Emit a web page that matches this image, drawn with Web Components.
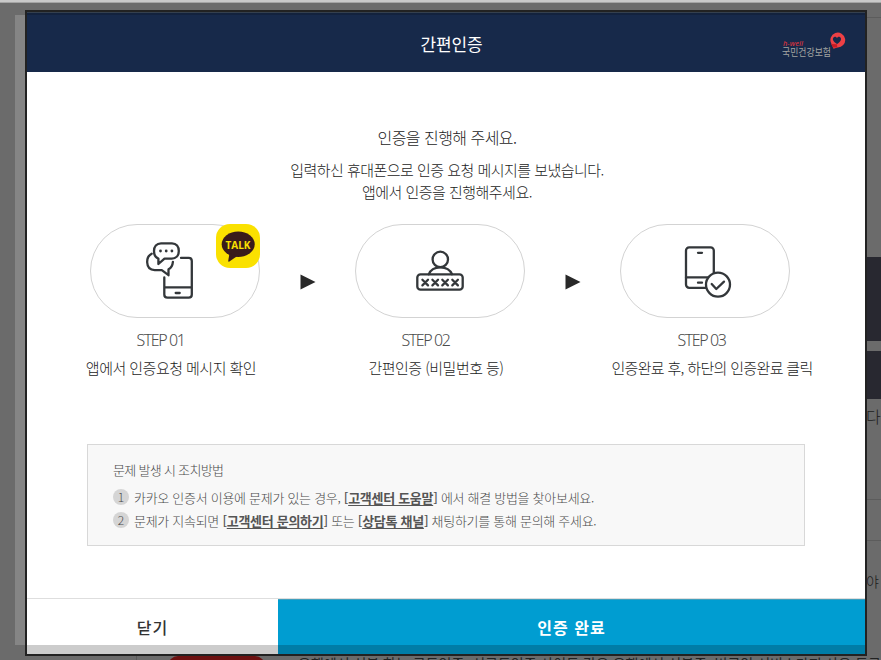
<!DOCTYPE html>
<html lang="ko">
<head>
<meta charset="UTF-8">
<title>간편인증</title>
<style>
    html, body {
        margin: 0;
        height: 100%;
        overflow: hidden;
    }
    body {
        font-family: "Noto Sans CJK KR", "Noto Sans", sans-serif;
        font-weight: 300;
        color: #1c1c1c;
    }
</style>
</head>
<body>
<auth-page>
    <page-backdrop slot="backdrop"></page-backdrop>
    <auth-dialog>
        <span slot="title">간편인증</span>
        <nhis-logo slot="logo"></nhis-logo>
        <auth-message>
            <span slot="lead">인증을 진행해 주세요.</span>
            <span>입력하신 휴대폰으로 인증 요청 메시지를 보냈습니다.<br>앱에서 인증을 진행해주세요.</span>
        </auth-message>
        <step-list>
            <auth-step icon="message" step="STEP 01">앱에서 인증요청 메시지 확인<talk-badge slot="badge"></talk-badge></auth-step>
            <step-arrow></step-arrow>
            <auth-step icon="password" step="STEP 02">간편인증 (비밀번호 등)</auth-step>
            <step-arrow></step-arrow>
            <auth-step icon="complete" step="STEP 03" class="last">인증완료 후, 하단의 인증완료 클릭</auth-step>
        </step-list>
        <help-box>
            <span slot="title">문제 발생 시 조치방법</span>
            <help-item number="1">카카오 인증서 이용에 문제가 있는 경우, <help-link>고객센터 도움말</help-link> 에서 해결 방법을 찾아보세요.</help-item>
            <help-item number="2">문제가 지속되면 <help-link>고객센터 문의하기</help-link> 또는 <help-link>상담톡 채널</help-link> 채팅하기를 통해 문의해 주세요.</help-item>
        </help-box>
        <dialog-button slot="actions">닫기</dialog-button>
        <dialog-button slot="actions" primary>인증 완료</dialog-button>
    </auth-dialog>
</auth-page>

<script>
    class BaseElement extends HTMLElement {
        constructor() {
            super();
            this.attachShadow({ mode: 'open' });
        }

        connectedCallback() {
            this.shadowRoot.innerHTML = this.render();
        }
    }

    class AuthPage extends BaseElement {
        render() {
            return `
                <style>
                    :host {
                        display: grid;
                        grid-template: 660px / 881px;
                    }
                    ::slotted(*), slot { grid-area: 1 / 1; }
                </style>
                <slot name="backdrop"></slot>
                <slot></slot>
            `;
        }
    }

    class PageBackdrop extends BaseElement {
        render() {
            return `
                <style>
                    :host {
                        display: grid;
                        box-sizing: border-box;
                        grid-template-columns: 15px 853px 13px;
                        height: 660px;
                        overflow: hidden;
                        background: #6b6b6b;
                        border-top: 2px solid #c9c9c9;
                        box-shadow: inset 0 1px #a4a4a4;
                    }
                    .left {
                        grid-column: 2;
                        display: flex;
                        flex-direction: column;
                        padding-top: 13px;
                    }
                    .shade {
                        width: 20px;
                        height: 630px;
                        background: #858585;
                    }
                    .below {
                        display: flex;
                        height: 15px;
                        margin-left: 121px;
                        border-left: 1px solid #5a5a5a;
                    }
                    .pill {
                        width: 97px;
                        height: 26px;
                        margin: 11px 0 0 31px;
                        border-radius: 10px;
                        background: #6d1111;
                        flex: none;
                    }
                    .copy {
                        margin: 8px 0 0 33px;
                        font-size: 14px;
                        font-weight: 400;
                        line-height: 20px;
                        white-space: nowrap;
                        color: #222;
                    }
                    .side {
                        display: flex;
                        flex-direction: column;
                        margin-left: -2px;
                        font-size: 16px;
                        line-height: 20px;
                    }
                    .line { height: 1px; background: #5c5c5c; }
                    .dark { background: #282830; }
                </style>
                <div class="left">
                    <div class="shade"></div>
                    <div class="below">
                        <div class="pill"></div>
                        <div class="copy">은행에서 신분 하는 공동인증, 신공동인증 사이트 같은 은행에서 신분증, 병공인 서비스가지 사용 등록</div>
                    </div>
                </div>
                <div class="side">
                    <div class="line" style="margin-top:15px"></div>
                    <div class="dark" style="margin-top:239px;height:84px"></div>
                    <div class="dark" style="margin-top:10px;height:48px"></div>
                    <div style="margin-top:7px">다</div>
                    <div class="line" style="margin-top:73px"></div>
                    <div class="line" style="margin-top:40px"></div>
                    <div style="margin-top:30px;font-size:14px">야</div>
                </div>
            `;
        }
    }

    class AuthDialog extends BaseElement {
        render() {
            return `
                <style>
                    :host {
                        display: flex;
                        flex-direction: column;
                        box-sizing: border-box;
                        width: 842px;
                        height: 646px;
                        margin: 10px 0 0 25px;
                        border: 2px solid #222;
                        background: #fff;
                        z-index: 1;
                        position: relative;
                    }
                    header {
                        display: grid;
                        grid-template-columns: 1fr auto 1fr;
                        align-items: center;
                        box-sizing: border-box;
                        height: 60px;
                        padding: 4px 19px 0 30px;
                        background: #17294a;
                        box-shadow: inset 0 1px #35404e, inset 0 3px #13223d;
                        color: #fff;
                        font-size: 17px;
                        line-height: 24px;
                        font-weight: 400;
                        letter-spacing: -0.2px;
                    }
                    .title { grid-column: 2; }
                    .logo { justify-self: end; }
                    main {
                        flex: 1;
                        padding: 0 60px;
                    }
                    footer {
                        display: grid;
                        grid-template-columns: 251px 1fr;
                        height: 55px;
                        border-top: 1px solid #dedede;
                    }
                    /* shadow that the frame below casts over the buttons */
                    .shade {
                        position: absolute;
                        inset: auto 0 0 0;
                        height: 9px;
                        background: rgba(0, 0, 0, 0.2);
                    }
                </style>
                <header>
                    <div class="title"><slot name="title"></slot></div>
                    <div class="logo"><slot name="logo"></slot></div>
                </header>
                <main><slot></slot></main>
                <footer><slot name="actions"></slot></footer>
                <div class="shade"></div>
            `;
        }
    }

    class NhisLogo extends BaseElement {
        render() {
            return `
                <style>
                    :host {
                        display: block;
                        letter-spacing: 0;
                    }
                    svg { display: block; }
                </style>
                <svg width="64" height="28" viewBox="0 0 64 28">
                    <text x="1" y="15.5" font-family="Noto Sans, sans-serif" font-size="7.5" font-style="italic" font-weight="500" textLength="20" lengthAdjust="spacingAndGlyphs" fill="#d8343f">h-well</text>
                    <text x="0" y="26" font-size="9.8" font-weight="400" textLength="49" lengthAdjust="spacingAndGlyphs" fill="#a4a5a1">국민건강보험</text>
                    <g transform="translate(0 1.6)">
                        <path d="M49.5 12.3A7.4 7.4 0 1 1 55.3 15.8L51.5 17.2Z" fill="#ee4045"/>
                        <path d="M55 12.4C51 9.8 50.3 8 51.3 6.2C52.4 4.6 54.1 5.1 55 6.5C56 4.6 58 4.7 58.8 6.3C59.7 8.5 57.6 10.9 55 12.4Z" fill="#17294a"/>
                        <path d="M49 12.5L55 12.7L55.2 15.8L51 16Z" fill="#c71c25"/>
                    </g>
                </svg>
            `;
        }
    }

    class AuthMessage extends BaseElement {
        render() {
            return `
                <style>
                    :host {
                        display: block;
                        height: 152px;
                        padding-top: 53px;
                        box-sizing: border-box;
                        text-align: center;
                        font-size: 15px;
                        line-height: 22px;
                        letter-spacing: -0.53px;
                        margin-left: 2px;
                    }
                    .lead {
                        margin-bottom: 10px;
                        font-size: 16px;
                        line-height: 24px;
                    }
                </style>
                <div class="lead"><slot name="lead"></slot></div>
                <slot></slot>
            `;
        }
    }

    class StepList extends BaseElement {
        render() {
            return `
                <style>
                    :host {
                        display: grid;
                        grid-template-columns: 170px 95px 170px 95px 170px;
                        height: 220px;
                        margin-left: 3px;
                    }
                </style>
                <slot></slot>
            `;
        }
    }

    class StepArrow extends BaseElement {
        render() {
            return `
                <style>
                    :host {
                        display: block;
                        padding: 50px 0 0 40px;
                    }
                    svg { display: block; }
                </style>
                <svg width="16" height="16" viewBox="0 0 16 16"><path d="M0.5 0.5L15.5 8L0.5 15.5Z" fill="#282828"/></svg>
            `;
        }
    }

    const STEP_ICONS = {
        message: `
            <path d="M91 33.9H98.7Q101.8 33.9 101.8 37V70.5Q101.8 73.7 98.7 73.7H77.4Q74.3 73.7 74.3 70.5V53.5M74.3 63.4H101.8M85.7 69H89.7"/>
            <path d="M71 19.3H82C86.4 19.3 88.8 22.5 88.8 27C88.8 31.7 86 34.6 81.8 34.6H74.5L68.4 40V34.6C65.5 33.6 64 31 64 27C64 22.5 66.6 19.3 71 19.3Z"/>
            <path d="M61.7 29.7C57.8 31.7 57 35.2 57.2 38.5C57.4 43.5 60.2 46 64.7 46.1H71.8L78.5 51.2V45.2C81.3 43.8 82.6 41.4 82.9 37.8"/>
            <g fill="#33373a" stroke="none"><circle cx="70.5" cy="27" r="1.4"/><circle cx="76.2" cy="27" r="1.4"/><circle cx="81.9" cy="27" r="1.4"/></g>
        `,
        password: `
            <circle cx="85.3" cy="35.4" r="7.7"/>
            <path d="M73.8 50.3C75.5 45.8 79.6 43.3 85.3 43.3C91 43.3 95.2 45.8 97 50.3"/>
            <rect x="62.3" y="50.3" width="45.4" height="15.4" rx="3.2"/>
            <path d="M67.4 55.8L73 61.4M73 55.8L67.4 61.4M77.4 55.8L83 61.4M83 55.8L77.4 61.4M87.3 55.8L92.9 61.4M92.9 55.8L87.3 61.4M97.3 55.8L102.9 61.4M102.9 55.8L97.3 61.4"/>
        `,
        complete: `
            <rect x="66" y="23.4" width="27.8" height="40.4" rx="3.2"/>
            <path d="M66 53.4H88M78 28.8H82M78 58.7H82"/>
            <circle cx="98" cy="60.6" r="12" fill="#fff"/>
            <path d="M91.7 60L96.3 65L104 57.6"/>
        `
    };

    class AuthStep extends BaseElement {
        render() {
            return `
                <style>
                    :host {
                        display: block;
                        --start: -46px;
                        --end: -38px;
                        --tracking: -0.53px;
                    }
                    :host(.last) {
                        --start: -27px;
                        --end: -41px;
                        --tracking: -0.66px;
                    }
                    .pill {
                        position: relative;
                        box-sizing: border-box;
                        height: 94px;
                        border: 1px solid #d3d3d3;
                        border-radius: 47px;
                    }
                    svg {
                        display: block;
                        margin: -1px;
                    }
                    ::slotted([slot="badge"]) {
                        position: absolute;
                        top: -1px;
                        right: -1px;
                    }
                    .caption {
                        margin: 10px var(--end) 0 var(--start);
                        text-align: center;
                        white-space: nowrap;
                    }
                    .step {
                        padding-right: 21px;
                        font-size: 16px;
                        line-height: 24px;
                        letter-spacing: -1.4px;
                        font-family: "Noto Sans", sans-serif;
                        color: #4c4c4c;
                    }
                    .text {
                        margin-top: 4px;
                        font-size: 15px;
                        line-height: 24px;
                        letter-spacing: var(--tracking);
                    }
                </style>
                <div class="pill">
                    <svg width="170" height="94" viewBox="0 0 170 94" fill="none" stroke="#33373a" stroke-width="2.3" stroke-linecap="round" stroke-linejoin="round">${STEP_ICONS[this.getAttribute('icon')]}</svg>
                    <slot name="badge"></slot>
                </div>
                <div class="caption">
                    <div class="step">${this.getAttribute('step')}</div>
                    <div class="text"><slot></slot></div>
                </div>
            `;
        }
    }

    class TalkBadge extends BaseElement {
        render() {
            return `
                <style>
                    :host {
                        display: block;
                        width: 44px;
                        height: 44px;
                        border-radius: 14px;
                        background: #fae100;
                    }
                    svg { display: block; }
                </style>
                <svg width="44" height="44" viewBox="0 0 44 44">
                    <ellipse cx="22.2" cy="20.3" rx="16.5" ry="12.7" fill="#391b1b"/>
                    <path d="M13.5 29L12.2 37Q12.3 38.2 13.4 37.5L21 32.2Z" fill="#391b1b"/>
                    <text x="9.5" y="24.6" font-family="Open Sans, sans-serif" font-size="10.5" font-weight="700" textLength="25" lengthAdjust="spacingAndGlyphs" fill="#fae100">TALK</text>
                </svg>
            `;
        }
    }

    class HelpBox extends BaseElement {
        render() {
            return `
                <style>
                    :host {
                        display: block;
                        box-sizing: border-box;
                        height: 102px;
                        padding: 15px 25px;
                        border: 1px solid #d8d8d8;
                        background: #f8f8f8;
                        color: #4a4a4a;
                        font-size: 13px;
                        line-height: 20px;
                        letter-spacing: -0.7px;
                    }
                    .items {
                        margin-top: 6px;
                        letter-spacing: -0.29px;
                    }
                </style>
                <slot name="title"></slot>
                <div class="items"><slot></slot></div>
            `;
        }
    }

    class HelpItem extends BaseElement {
        render() {
            return `
                <style>
                    :host {
                        display: flex;
                        gap: 5px;
                        height: 23px;
                        line-height: 23px;
                        white-space: nowrap;
                    }
                    .number {
                        width: 16px;
                        height: 16px;
                        margin-top: 3px;
                        border-radius: 50%;
                        background: #d5d5d5;
                        font-size: 12px;
                        line-height: 16px;
                        text-align: center;
                        letter-spacing: 0;
                    }
                </style>
                <div class="number">${this.getAttribute('number')}</div>
                <div><slot></slot></div>
            `;
        }
    }

    class HelpLink extends BaseElement {
        render() {
            return `
                <style>
                    :host {
                        display: inline;
                        color: #555;
                    }
                    b { font-weight: 500; }
                    a {
                        font-weight: 700;
                        text-decoration: underline;
                        text-underline-offset: 2px;
                    }
                </style><b>[<a><slot></slot></a>]</b>`;
        }
    }

    class DialogButton extends BaseElement {
        render() {
            return `
                <style>
                    :host {
                        display: block;
                        padding-top: 16px;
                        text-align: center;
                        font-size: 16px;
                        font-weight: 500;
                        line-height: 24px;
                        letter-spacing: 1px;
                        color: #333;
                    }
                    :host([primary]) {
                        background: #009dd1;
                        box-shadow: inset 0 1px #3f9fbe;
                        font-weight: 700;
                        color: #fff;
                    }
                </style>
                <slot></slot>
            `;
        }
    }

    customElements.define('auth-page', AuthPage);
    customElements.define('page-backdrop', PageBackdrop);
    customElements.define('auth-dialog', AuthDialog);
    customElements.define('nhis-logo', NhisLogo);
    customElements.define('auth-message', AuthMessage);
    customElements.define('step-list', StepList);
    customElements.define('step-arrow', StepArrow);
    customElements.define('auth-step', AuthStep);
    customElements.define('talk-badge', TalkBadge);
    customElements.define('help-box', HelpBox);
    customElements.define('help-item', HelpItem);
    customElements.define('help-link', HelpLink);
    customElements.define('dialog-button', DialogButton);
</script>
</body>
</html>
